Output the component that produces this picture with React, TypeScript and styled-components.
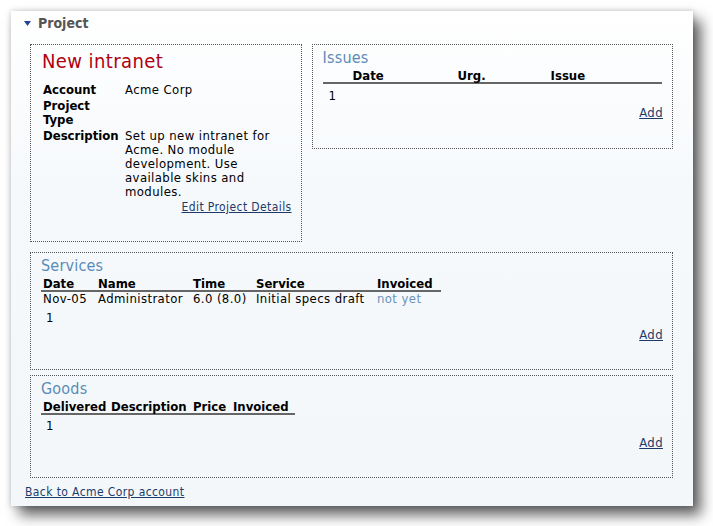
import styled, { createGlobalStyle } from "styled-components";

const GlobalStyle = createGlobalStyle`
  html, body {
    margin: 0;
    padding: 0;
    background: #ffffff;
  }
  body {
    font-family: "DejaVu Sans Condensed", "DejaVu Sans", Verdana, sans-serif;
    font-size: 13px;
    letter-spacing: 0.4px;
    color: #000;
  }
`;

const Panel = styled.div`
  box-sizing: border-box;
  width: 682px;
  height: 495px;
  margin: 11px 0 20px 11px;
  padding: 4px 20px 0 19px;
  background: linear-gradient(to bottom, #ffffff 0%, #f6f9fc 35%, #f3f7fa 100%);
  box-shadow: 0 0 6px rgba(0, 0, 0, 0.2), 8px 9px 13px rgba(0, 0, 0, 0.62);
`;

const Header = styled.div`
  display: flex;
  align-items: center;
  gap: 7px;
  margin-left: -6px;
  height: 16px;
  font-size: 14px;
  font-weight: bold;
  letter-spacing: 0;
  color: #555;

  svg {
    width: 7px;
    height: 5px;
  }
`;

const TopRow = styled.div`
  display: flex;
  gap: 10px;
  margin-top: 13px;
  align-items: flex-start;
`;

const Box = styled.div<{ $width?: number; $height: number; $padLeft?: number; $padRight?: number }>`
  box-sizing: border-box;
  width: ${(p) => (p.$width ? `${p.$width}px` : "100%")};
  height: ${(p) => p.$height}px;
  border: 1px dotted #555;
  padding: 4px ${(p) => p.$padRight ?? 10}px 0 ${(p) => p.$padLeft ?? 10}px;
  display: flex;
  flex-direction: column;
`;

const Title = styled.div`
  font-size: 20px;
  line-height: 24px;
  color: #b00010;
`;

const DetailTable = styled.table`
  align-self: flex-start;
  border-collapse: collapse;
  margin: 9px 0 0 1px;
  line-height: 14px;

  td {
    padding: 1px 0;
    vertical-align: top;
  }
  td.label {
    width: 82px;
    font-weight: bold;
    letter-spacing: 0;
  }
  td.value {
    width: 155px;
  }
`;

const RightLink = styled.div`
  text-align: right;
  line-height: 14px;
  font-size: 12px;
`;

const Link = styled.a`
  color: #1c3b6b;
  text-decoration: underline;
  cursor: pointer;
`;

const BoxHeading = styled.div`
  font-size: 16px;
  line-height: 18px;
  letter-spacing: 0.2px;
  color: #5a8bb7;
`;

const DataTable = styled.table<{ $full?: boolean }>`
  border-collapse: collapse;
  align-self: ${(p) => (p.$full ? "stretch" : "flex-start")};
  width: ${(p) => (p.$full ? "100%" : "auto")};
  table-layout: fixed;

  th {
    text-align: left;
    font-weight: bold;
    letter-spacing: 0;
    line-height: 13px;
    padding: 2px 2px 0 2px;
    border-bottom: 2px solid #666;
    white-space: nowrap;
  }
  td {
    line-height: 14px;
    padding: 0 2px;
    white-space: nowrap;
  }
`;

const Pager = styled.div<{ $indent: number; $top: number }>`
  line-height: 14px;
  margin-top: ${(p) => p.$top}px;
  padding-left: ${(p) => p.$indent}px;
`;

const AddRow = styled.div`
  text-align: right;
  line-height: 14px;
  margin: 3px -1px 0 0;
`;

const NotYet = styled.span`
  color: #6a93b9;
`;

const Stack = styled.div<{ $gap: number }>`
  margin-top: ${(p) => p.$gap}px;
`;

const BackLink = styled.div`
  margin: 7px 0 0 -5px;
  line-height: 14px;
  font-size: 12px;
`;

export default function App() {
  return (
    <>
      <GlobalStyle />
      <Panel>
        <Header>
          <svg viewBox="0 0 7 5">
            <polygon points="0,0 7,0 3.5,5" fill="#22449a" />
          </svg>
          <span>Project</span>
        </Header>

        <TopRow>
          <Box $width={272} $height={198} $padLeft={11} $padRight={9}>
            <Title>New intranet</Title>
            <DetailTable>
              <tbody>
                <tr>
                  <td className="label">Account</td>
                  <td className="value">Acme Corp</td>
                </tr>
                <tr>
                  <td className="label">Project<br />Type</td>
                  <td className="value"></td>
                </tr>
                <tr>
                  <td className="label">Description</td>
                  <td className="value">
                    Set up new intranet for Acme. No module development. Use available skins and modules.
                  </td>
                </tr>
              </tbody>
            </DetailTable>
            <RightLink>
              <Link>Edit Project Details</Link>
            </RightLink>
          </Box>

          <Box $width={362} $height={105}>
            <BoxHeading>Issues</BoxHeading>
            <DataTable $full>
              <thead>
                <tr>
                  <th style={{ width: 101, paddingLeft: 30 }}>Date</th>
                  <th style={{ width: 89 }}>Urg.</th>
                  <th>Issue</th>
                </tr>
              </thead>
            </DataTable>
            <Pager $indent={6} $top={5}>1</Pager>
            <AddRow>
              <Link>Add</Link>
            </AddRow>
          </Box>
        </TopRow>

        <Stack $gap={10}>
          <Box $height={118}>
            <BoxHeading>Services</BoxHeading>
            <DataTable>
              <colgroup>
                <col style={{ width: 55 }} />
                <col style={{ width: 95 }} />
                <col style={{ width: 63 }} />
                <col style={{ width: 121 }} />
                <col style={{ width: 66 }} />
              </colgroup>
              <thead>
                <tr>
                  <th>Date</th>
                  <th>Name</th>
                  <th>Time</th>
                  <th>Service</th>
                  <th>Invoiced</th>
                </tr>
              </thead>
              <tbody>
                <tr>
                  <td>Nov-05</td>
                  <td>Administrator</td>
                  <td>6.0 (8.0)</td>
                  <td>Initial specs draft</td>
                  <td>
                    <NotYet>not yet</NotYet>
                  </td>
                </tr>
              </tbody>
            </DataTable>
            <Pager $indent={5} $top={5}>1</Pager>
            <AddRow>
              <Link>Add</Link>
            </AddRow>
          </Box>
        </Stack>

        <Stack $gap={5}>
          <Box $height={103}>
            <BoxHeading>Goods</BoxHeading>
            <DataTable>
              <colgroup>
                <col style={{ width: 68 }} />
                <col style={{ width: 82 }} />
                <col style={{ width: 40 }} />
                <col style={{ width: 64 }} />
              </colgroup>
              <thead>
                <tr>
                  <th>Delivered</th>
                  <th>Description</th>
                  <th>Price</th>
                  <th>Invoiced</th>
                </tr>
              </thead>
            </DataTable>
            <Pager $indent={5} $top={4}>1</Pager>
            <AddRow>
              <Link>Add</Link>
            </AddRow>
          </Box>
        </Stack>

        <BackLink>
          <Link>Back to Acme Corp account</Link>
        </BackLink>
      </Panel>
    </>
  );
}
